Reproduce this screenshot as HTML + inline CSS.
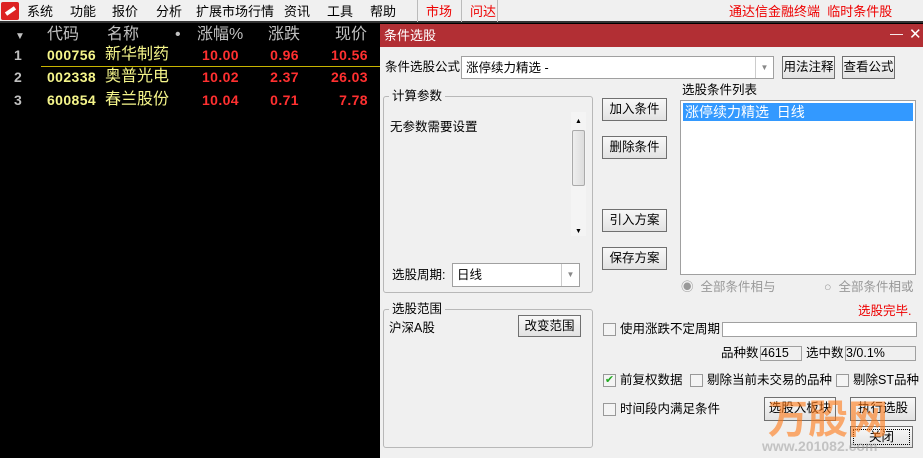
<!DOCTYPE html>
<html><head><meta charset="utf-8"><style>
*{margin:0;padding:0;box-sizing:border-box}
body{width:923px;height:458px;overflow:hidden;background:#000;font-family:"Liberation Sans","Noto Sans CJK SC",sans-serif;position:relative}
.a{position:absolute;white-space:nowrap;line-height:16px}
.menu{left:0;top:0;width:923px;height:23px;background:#f0f0f0;border-bottom:2px solid #333;font-size:13px;color:#000}
.menu .a{top:4px}
.sep{position:absolute;top:0;width:1px;height:22px;background:#bbb}
.hd{top:27px;font-size:16px;color:#c0c0c0}
.r{font-size:14px;font-weight:bold;letter-spacing:0.4px}
.y{color:#f5f58a}.red{color:#ff3030}.g{color:#c0c0c0}
.nm{font-size:16px;color:#f5f58a}
.dlg{left:380px;top:24px;width:543px;height:434px;background:#f0f0f0;font-size:12.5px;color:#000}
.box{position:absolute;background:#fff;border:1px solid #a0a0a0;line-height:16px}
.btn{position:absolute;background:linear-gradient(#f8f8f8,#e2e2e2);border:1px solid #707070;font-size:12.5px;text-align:center;line-height:20px}
.grp{position:absolute;border:1px solid #b8b8b8;border-radius:3px}
.cb{position:absolute;width:13px;height:13px;border:1px solid #999;background:#f4f4f4}
.dd{position:absolute;right:0;top:0;width:18px;height:100%;border-left:1px solid #ccc;color:#888;font-size:8px;text-align:center}
</style></head><body>
<div class="a menu">
 <div style="position:absolute;left:1px;top:2px;width:18px;height:18px;background:#d22;border-radius:2px"><div style="position:absolute;left:4px;top:7px;width:11px;height:4px;background:#fff;transform:rotate(-35deg)"></div></div>
 <span class="a" style="left:27px">系统</span><span class="a" style="left:70px">功能</span><span class="a" style="left:112px">报价</span><span class="a" style="left:156px">分析</span><span class="a" style="left:196px">扩展市场行情</span><span class="a" style="left:284px">资讯</span><span class="a" style="left:327px">工具</span><span class="a" style="left:370px">帮助</span>
 <div class="sep" style="left:417px"></div><span class="a" style="left:426px;color:#e00">市场</span><div class="sep" style="left:461px"></div><span class="a" style="left:470px;color:#e00">问达</span><div class="sep" style="left:497px"></div>
 <span class="a" style="left:729px;color:#e00">通达信金融终端&nbsp; 临时条件股</span>
</div>
<span class="a hd" style="left:15px;font-size:10px;top:29px">▼</span>
<span class="a hd" style="left:47px">代码</span><span class="a hd" style="left:107px">名称</span><span class="a hd" style="left:175px">•</span><span class="a hd" style="left:197px">涨幅%</span><span class="a hd" style="left:268px">涨跌</span><span class="a hd" style="left:335px">现价</span>
<div class="a" style="left:41px;top:66px;width:340px;height:1px;background:#c8b400"></div>
<div class="a" style="top:47px;left:0;width:380px;height:80px">
<span class="a r g" style="left:14px;top:0">1</span><span class="a r y" style="left:47px;top:0">000756</span><span class="a nm" style="left:105px;top:0">新华制药</span><span class="a r red" style="right:141px;top:0">10.00</span><span class="a r red" style="right:81px;top:0">0.96</span><span class="a r red" style="right:12px;top:0">10.56</span>
<span class="a r g" style="left:14px;top:22px">2</span><span class="a r y" style="left:47px;top:22px">002338</span><span class="a nm" style="left:105px;top:22px">奥普光电</span><span class="a r red" style="right:141px;top:22px">10.02</span><span class="a r red" style="right:81px;top:22px">2.37</span><span class="a r red" style="right:12px;top:22px">26.03</span>
<span class="a r g" style="left:14px;top:45px">3</span><span class="a r y" style="left:47px;top:45px">600854</span><span class="a nm" style="left:105px;top:45px">春兰股份</span><span class="a r red" style="right:141px;top:45px">10.04</span><span class="a r red" style="right:81px;top:45px">0.71</span><span class="a r red" style="right:12px;top:45px">7.78</span>
</div>
<div class="a dlg">
 <div style="position:absolute;left:0;top:0;width:543px;height:23px;background:#b22f34;color:#fff;font-size:13px;padding:4px 0 0 4px;line-height:16px">条件选股<span style="position:absolute;left:510px;top:2px">—</span><span style="position:absolute;left:529px;top:3px;font-size:15px">✕</span></div>
 <span class="a" style="left:5px;top:35px">条件选股公式</span>
 <div class="box" style="left:81px;top:32px;width:313px;height:23px;padding:3px 4px">涨停续力精选 -<div class="dd" style="line-height:21px">▼</div></div>
 <div class="btn" style="left:402px;top:32px;width:53px;height:23px">用法注释</div>
 <div class="btn" style="left:462px;top:32px;width:53px;height:23px">查看公式</div>
 <div class="grp" style="left:3px;top:72px;width:210px;height:197px"></div>
 <span class="a" style="left:9px;top:64px;background:#f0f0f0;padding:0 3px">计算参数</span>
 <span class="a" style="left:10px;top:95px">无参数需要设置</span>
 <div style="position:absolute;left:191px;top:88px;width:15px;height:124px;background:#f4f4f4"><div style="position:absolute;left:1px;top:18px;width:13px;height:56px;border:1px solid #aaa;border-radius:2px;background:linear-gradient(90deg,#eee,#ddd)"></div><span style="position:absolute;left:4px;top:2px;font-size:7px">▲</span><span style="position:absolute;left:4px;top:112px;font-size:7px">▼</span></div>
 <span class="a" style="left:12px;top:243px">选股周期:</span>
 <div class="box" style="left:72px;top:239px;width:128px;height:24px;padding:3px 4px">日线<div class="dd" style="line-height:22px">▼</div></div>
 <div class="grp" style="left:3px;top:285px;width:210px;height:139px"></div>
 <span class="a" style="left:9px;top:277px;background:#f0f0f0;padding:0 3px">选股范围</span>
 <span class="a" style="left:9px;top:296px">沪深A股</span>
 <div class="btn" style="left:138px;top:291px;width:63px;height:22px">改变范围</div>
 <div class="btn" style="left:222px;top:74px;width:65px;height:23px">加入条件</div>
 <div class="btn" style="left:222px;top:112px;width:65px;height:23px">删除条件</div>
 <div class="btn" style="left:222px;top:185px;width:65px;height:23px">引入方案</div>
 <div class="btn" style="left:222px;top:223px;width:65px;height:23px">保存方案</div>
 <span class="a" style="left:302px;top:58px">选股条件列表</span>
 <div class="box" style="left:300px;top:76px;width:236px;height:175px;padding:2px"><div style="background:#3399ff;color:#fff;height:18px;font-size:14px;padding-left:2px;line-height:18px">涨停续力精选&nbsp; 日线</div></div>
 <span class="a" style="left:301px;top:255px;color:#999">◉&nbsp; 全部条件相与</span>
 <span class="a" style="left:444px;top:255px;color:#999">○&nbsp; 全部条件相或</span>
 <span class="a" style="left:478px;top:279px;color:#e00">选股完毕.</span>
 <div class="cb" style="left:223px;top:299px"></div><span class="a" style="left:240px;top:297px">使用涨跌不定周期</span>
 <div class="box" style="left:342px;top:298px;width:195px;height:15px"></div>
 <span class="a" style="left:341px;top:321px">品种数</span><div class="box" style="left:380px;top:322px;width:42px;height:15px;background:#f0f0f0;line-height:13px">4615</div>
 <span class="a" style="left:426px;top:321px">选中数</span><div class="box" style="left:465px;top:322px;width:71px;height:15px;background:#f0f0f0;line-height:13px">3/0.1%</div>
 <div class="cb" style="left:223px;top:350px;color:#2a2;font-size:11px;line-height:11px;text-align:center">✔</div><span class="a" style="left:240px;top:348px">前复权数据</span>
 <div class="cb" style="left:310px;top:350px"></div><span class="a" style="left:327px;top:348px">剔除当前未交易的品种</span>
 <div class="cb" style="left:456px;top:350px"></div><span class="a" style="left:473px;top:348px">剔除ST品种</span>
 <div class="cb" style="left:223px;top:379px"></div><span class="a" style="left:240px;top:377px">时间段内满足条件</span>
 <div class="btn" style="left:384px;top:373px;width:72px;height:24px">选股入板块</div>
 <div class="btn" style="left:470px;top:373px;width:66px;height:24px">执行选股</div>
 <div class="btn" style="left:470px;top:402px;width:63px;height:22px;outline:1px dotted #000;outline-offset:-4px">关闭</div>
 <span class="a" style="left:388px;top:374px;font-size:40px;line-height:44px;font-weight:bold;color:rgba(255,120,20,0.6)">万股网</span>
 <span class="a" style="left:382px;top:414px;font-size:14px;font-weight:bold;color:rgba(150,150,150,0.5)">www.201082.com</span>
</div>
</body></html>
